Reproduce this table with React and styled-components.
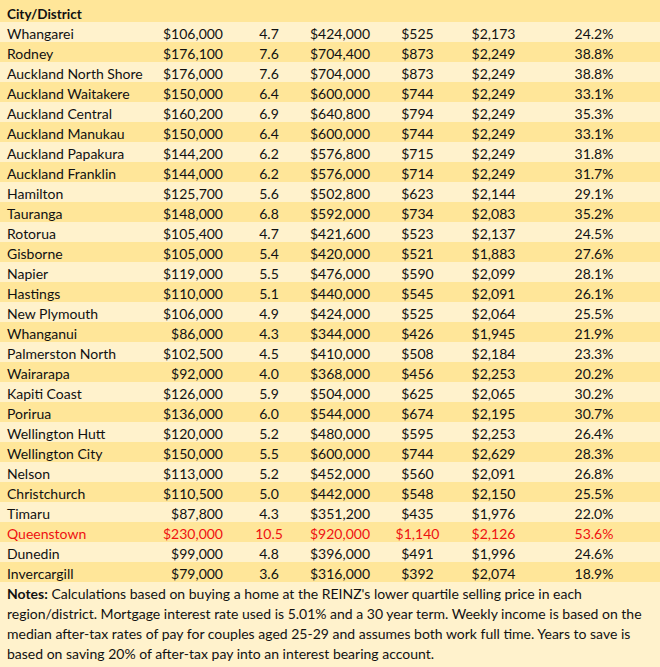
import React from 'react';
import styled, { createGlobalStyle } from 'styled-components';

const rows = [
	['Whangarei', '$106,000', '4.7', '$424,000', '$525', '$2,173', '24.2%'],
	['Rodney', '$176,100', '7.6', '$704,400', '$873', '$2,249', '38.8%'],
	['Auckland North Shore', '$176,000', '7.6', '$704,000', '$873', '$2,249', '38.8%'],
	['Auckland Waitakere', '$150,000', '6.4', '$600,000', '$744', '$2,249', '33.1%'],
	['Auckland Central', '$160,200', '6.9', '$640,800', '$794', '$2,249', '35.3%'],
	['Auckland Manukau', '$150,000', '6.4', '$600,000', '$744', '$2,249', '33.1%'],
	['Auckland Papakura', '$144,200', '6.2', '$576,800', '$715', '$2,249', '31.8%'],
	['Auckland Franklin', '$144,000', '6.2', '$576,000', '$714', '$2,249', '31.7%'],
	['Hamilton', '$125,700', '5.6', '$502,800', '$623', '$2,144', '29.1%'],
	['Tauranga', '$148,000', '6.8', '$592,000', '$734', '$2,083', '35.2%'],
	['Rotorua', '$105,400', '4.7', '$421,600', '$523', '$2,137', '24.5%'],
	['Gisborne', '$105,000', '5.4', '$420,000', '$521', '$1,883', '27.6%'],
	['Napier', '$119,000', '5.5', '$476,000', '$590', '$2,099', '28.1%'],
	['Hastings', '$110,000', '5.1', '$440,000', '$545', '$2,091', '26.1%'],
	['New Plymouth', '$106,000', '4.9', '$424,000', '$525', '$2,064', '25.5%'],
	['Whanganui', '$86,000', '4.3', '$344,000', '$426', '$1,945', '21.9%'],
	['Palmerston North', '$102,500', '4.5', '$410,000', '$508', '$2,184', '23.3%'],
	['Wairarapa', '$92,000', '4.0', '$368,000', '$456', '$2,253', '20.2%'],
	['Kapiti Coast', '$126,000', '5.9', '$504,000', '$625', '$2,065', '30.2%'],
	['Porirua', '$136,000', '6.0', '$544,000', '$674', '$2,195', '30.7%'],
	['Wellington Hutt', '$120,000', '5.2', '$480,000', '$595', '$2,253', '26.4%'],
	['Wellington City', '$150,000', '5.5', '$600,000', '$744', '$2,629', '28.3%'],
	['Nelson', '$113,000', '5.2', '$452,000', '$560', '$2,091', '26.8%'],
	['Christchurch', '$110,500', '5.0', '$442,000', '$548', '$2,150', '25.5%'],
	['Timaru', '$87,800', '4.3', '$351,200', '$435', '$1,976', '22.0%'],
	['Queenstown', '$230,000', '10.5', '$920,000', '$1,140', '$2,126', '53.6%'],
	['Dunedin', '$99,000', '4.8', '$396,000', '$491', '$1,996', '24.6%'],
	['Invercargill', '$79,000', '3.6', '$316,000', '$392', '$2,074', '18.9%'],
];

const GlobalStyle = createGlobalStyle`
	body {
		margin: 0;
		background: #fff2cc;
		font-family: Lato, 'Liberation Sans', sans-serif;
		color: #111;
	}
`;

const Sheet = styled.div`
	width: 660px;
	height: 667px;
	background: #fff2cc;
	overflow: hidden;
`;

const HeaderRow = styled.div`
	box-sizing: border-box;
	height: 22px;
	padding: 5px 0 0 7px;
	background: #ffe699;
	display: flex;
	align-items: center;
	font-size: 13.5px;
	font-weight: 700;
`;

const Row = styled.div`
	display: grid;
	grid-template-columns: 150px 78px 82px 62px 91px 61px 1fr;
	height: 20px;
	align-items: center;
	font-size: 14px;
	background: ${(p) => (p.$dark ? '#ffe699' : '#fff2cc')};
	color: ${(p) => (p.$alert ? '#ee1111' : '#111')};
`;

const Cell = styled.div`
	white-space: nowrap;
	padding-top: 2px;
	text-align: ${(p) => p.$align || 'center'};
	padding-left: ${(p) => p.$pl || 0}px;
	padding-right: ${(p) => p.$pr || 0}px;
`;

const Notes = styled.div`
	padding: 2px 0 3px 7px;
	font-size: 14px;
	line-height: 20px;
`;

const Line = styled.div`
	white-space: nowrap;
`;

const aligns = [
	{ $align: 'left', $pl: 7 },
	{ $align: 'right', $pr: 5 },
	{},
	{ $align: 'right', $pr: 5 },
	{},
	{},
	{ $pl: 4 },
];

export default function App() {
	return (
		<>
			<GlobalStyle />
			<Sheet>
				<HeaderRow>City/District</HeaderRow>
				{rows.map((r, i) => (
					<Row key={r[0]} $dark={i % 2 === 1} $alert={r[0] === 'Queenstown'}>
						{r.map((v, j) => (
							<Cell key={j} {...aligns[j]}>
								{v}
							</Cell>
						))}
					</Row>
				))}
				<Notes>
					<Line>
						<b>Notes:</b> Calculations based on buying a home at the REINZ's lower quartile selling price in each
					</Line>
					<Line>
						region/district. Mortgage interest rate used is 5.01% and a 30 year term. Weekly income is based on the
					</Line>
					<Line>
						median after-tax rates of pay for couples aged 25-29 and assumes both work full time. Years to save is
					</Line>
					<Line>based on saving 20% of after-tax pay into an interest bearing account.</Line>
				</Notes>
			</Sheet>
		</>
	);
}
